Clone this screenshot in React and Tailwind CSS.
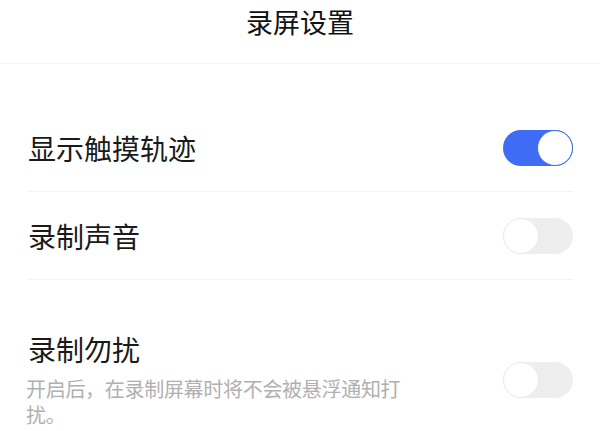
import { useState } from "react";

function Toggle({ on, onClick }) {
  return (
    <button
      onClick={onClick}
      className={
        "relative w-[70px] h-[36px] rounded-full shrink-0 transition-colors " +
        (on ? "bg-[#3f6cf4]" : "bg-[#eeeeee]")
      }
    >
      <span
        className={
          "absolute top-0 w-[36px] h-[36px] rounded-full bg-white border-[1.5px] " +
          (on ? "right-0 border-[#3f6cf4]" : "left-0 border-[#e9e9e9]")
        }
      />
    </button>
  );
}

export default function App() {
  const [touch, setTouch] = useState(true);
  const [sound, setSound] = useState(false);
  const [dnd, setDnd] = useState(false);

  return (
    <div
      className="w-[600px] h-[431px] bg-white overflow-hidden text-[#1a1a1a]"
      style={{ fontFamily: '"Noto Sans CJK SC", "Noto Sans", sans-serif' }}
    >
      <div className="h-[64px] flex items-center justify-center border-b border-[#f3f3f3] text-[27px] text-[#111] pb-[18px]">
        录屏设置
      </div>
      <div className="pl-[28px] pr-[27px] pt-[40px]">
        <div className="h-[88px] flex items-center justify-between border-b border-[#f3f3f3]">
          <span className="text-[28px]">显示触摸轨迹</span>
          <Toggle on={touch} onClick={() => setTouch(!touch)} />
        </div>
        <div className="h-[88px] flex items-center justify-between border-b border-[#f3f3f3]">
          <span className="text-[28px]">录制声音</span>
          <Toggle on={sound} onClick={() => setSound(!sound)} />
        </div>
        <div className="pt-[51px] flex items-center justify-between">
          <div className="flex flex-col gap-[9px]">
            <span className="text-[28px] leading-[36px]">录制勿扰</span>
            <span className="text-[20px] leading-[26px] text-[#b0b0b0] max-w-[392px] -ml-[2px] tracking-[-0.3px]">
              开启后，在录制屏幕时将不会被悬浮通知打扰。
            </span>
          </div>
          <Toggle on={dnd} onClick={() => setDnd(!dnd)} />
        </div>
      </div>
    </div>
  );
}
